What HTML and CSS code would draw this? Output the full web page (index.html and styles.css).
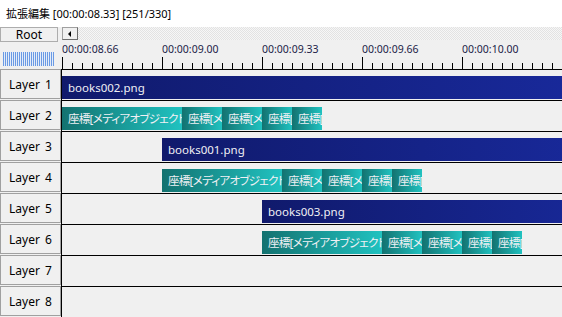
FILE: index.html
```html
<!DOCTYPE HTML>
<html lang="ja">
<head>
    <meta charset="UTF-8">
    <meta name="viewport" content="width=device-width, initial-scale=1.0">
    <title>拡張編集</title>
    <link rel="stylesheet" href="styles.css">
</head>
<body>

    <div class="title">拡張編集 [00:00:08.33] [251/330]</div>

    <div class="editor">
        <div class="side">
            <div class="side-head">
                <div class="root-btn">Root</div>
                <div class="stripes"></div>
            </div>
            <div class="layer-btn">Layer 1</div>
            <div class="layer-btn">Layer 2</div>
            <div class="layer-btn">Layer 3</div>
            <div class="layer-btn">Layer 4</div>
            <div class="layer-btn">Layer 5</div>
            <div class="layer-btn">Layer 6</div>
            <div class="layer-btn">Layer 7</div>
            <div class="layer-btn">Layer 8</div>
        </div>

        <div class="main">
            <div class="ruler">
                <div class="scroll">
                    <div class="scroll-btn"><span class="arrow"></span></div>
                    <div class="hatch"></div>
                </div>
                <div class="scale">
                    <div class="labels">
                        <span>00:00:08.66</span>
                        <span>00:00:09.00</span>
                        <span>00:00:09.33</span>
                        <span>00:00:09.66</span>
                        <span>00:00:10.00</span>
                    </div>
                    <div class="ticks"></div>
                </div>
            </div>

            <!-- 1 frame = 10px -->
            <div class="row">
                <div class="clip image" style="left:0;width:620px">books002.png</div>
            </div>
            <div class="row">
                <div class="clip coord" style="left:0;width:120px">座標[メディアオブジェクト]</div>
                <div class="clip coord" style="left:120px;width:40px">座標[メディアオブジェクト]</div>
                <div class="clip coord" style="left:160px;width:40px">座標[メディアオブジェクト]</div>
                <div class="clip coord" style="left:200px;width:30px">座標[メディアオブジェクト]</div>
                <div class="clip coord" style="left:230px;width:30px">座標[メディアオブジェクト]</div>
            </div>
            <div class="row">
                <div class="clip image" style="left:100px;width:520px">books001.png</div>
            </div>
            <div class="row">
                <div class="clip coord" style="left:100px;width:120px">座標[メディアオブジェクト]</div>
                <div class="clip coord" style="left:220px;width:40px">座標[メディアオブジェクト]</div>
                <div class="clip coord" style="left:260px;width:40px">座標[メディアオブジェクト]</div>
                <div class="clip coord" style="left:300px;width:30px">座標[メディアオブジェクト]</div>
                <div class="clip coord" style="left:330px;width:30px">座標[メディアオブジェクト]</div>
            </div>
            <div class="row">
                <div class="clip image" style="left:200px;width:420px">books003.png</div>
            </div>
            <div class="row">
                <div class="clip coord" style="left:200px;width:120px">座標[メディアオブジェクト]</div>
                <div class="clip coord" style="left:320px;width:40px">座標[メディアオブジェクト]</div>
                <div class="clip coord" style="left:360px;width:40px">座標[メディアオブジェクト]</div>
                <div class="clip coord" style="left:400px;width:30px">座標[メディアオブジェクト]</div>
                <div class="clip coord" style="left:430px;width:30px">座標[メディアオブジェクト]</div>
            </div>
            <div class="row"></div>
            <div class="row"></div>
        </div>
    </div>

</body>
</html>
```

FILE: styles.css
```css
html, body {
    margin: 0;
    padding: 0;
}
body {
    width: 562px;
    height: 317px;
    overflow: hidden;
    background-color: #f0f0f0;
    font-family: "Noto Sans", "Noto Sans CJK JP", sans-serif;
    font-size: 12px;
    color: #000;
}
.title {
    height: 27px;
    line-height: 27px;
    padding-left: 6px;
    background-color: #fff;
    white-space: nowrap;
    font-size: 11px;
    font-feature-settings: "palt";
}
.editor {
    display: flex;
}
.side {
    width: 61px;
    flex: none;
}
.side-head {
    height: 42px;
}
.root-btn {
    width: 56px;
    height: 13px;
    line-height: 13px;
    border: 1px solid #adadad;
    text-align: center;
    font-size: 12px;
}
.stripes {
    width: 51px;
    height: 14px;
    margin: 10px 0 0 3px;
    background: repeating-linear-gradient(to right, #6a9ae4 0 1px, #e4ecf8 1px 2px);
}
.layer-btn {
    height: 28px;
    line-height: 29px;
    margin-bottom: 1px;
    border: 1px solid #a0a0a0;
    text-align: center;
    word-spacing: 2px;
}
.main {
    flex: 1;
    overflow: hidden;
}
.ruler {
    height: 42px;
    padding-left: 1px;
    border-bottom: 1px solid #000;
}
.scroll {
    display: flex;
    height: 13px;
}
.scroll-btn {
    width: 14px;
    height: 11px;
    border: 1px solid #a0a0a0;
    border-bottom-color: #6e6e6e;
    border-right-color: #6e6e6e;
    background-color: #f0f0f0;
    display: flex;
    align-items: center;
    justify-content: center;
    flex: none;
}
.arrow {
    width: 0;
    height: 0;
    border-top: 3px solid transparent;
    border-bottom: 3px solid transparent;
    border-right: 3px solid #000;
    margin-right: 2px;
}
.hatch {
    flex: 1;
    background: repeating-conic-gradient(#e2e2e2 0 25%, #f6f6f6 0 50%) 0 0 / 2px 2px;
}
.scale {
    height: 29px;
    position: relative;
}
.labels {
    display: flex;
    padding-top: 2px;
    font-size: 10.5px;
    line-height: 14px;
    color: #1c1c48;
}
.labels span {
    width: 100px;
    flex: none;
}
.ticks {
    position: absolute;
    left: 0;
    right: 0;
    bottom: 0;
    height: 12px;
    background:
        repeating-linear-gradient(to right, #000 0 1px, transparent 1px 100px) bottom / 100% 12px no-repeat,
        repeating-linear-gradient(to right, #000 0 1px, transparent 1px 10px) bottom / 100% 6px no-repeat;
}
.row {
    height: 30px;
    position: relative;
    overflow: hidden;
    border-left: 1px solid #000;
    border-bottom: 1px solid #000;
}
.clip {
    position: absolute;
    top: 6px;
    height: 23px;
    line-height: 23px;
    padding-left: 6px;
    box-sizing: border-box;
    overflow: hidden;
    white-space: nowrap;
    color: #f0f0f4;
    font-size: 11.5px;
}
.image {
    background: linear-gradient(to right, #101a6c, #1a2ca4);
}
.coord {
    background: linear-gradient(to right, #137270, #20c2c0);
    letter-spacing: -0.7px;
    font-feature-settings: "palt";
}
```
